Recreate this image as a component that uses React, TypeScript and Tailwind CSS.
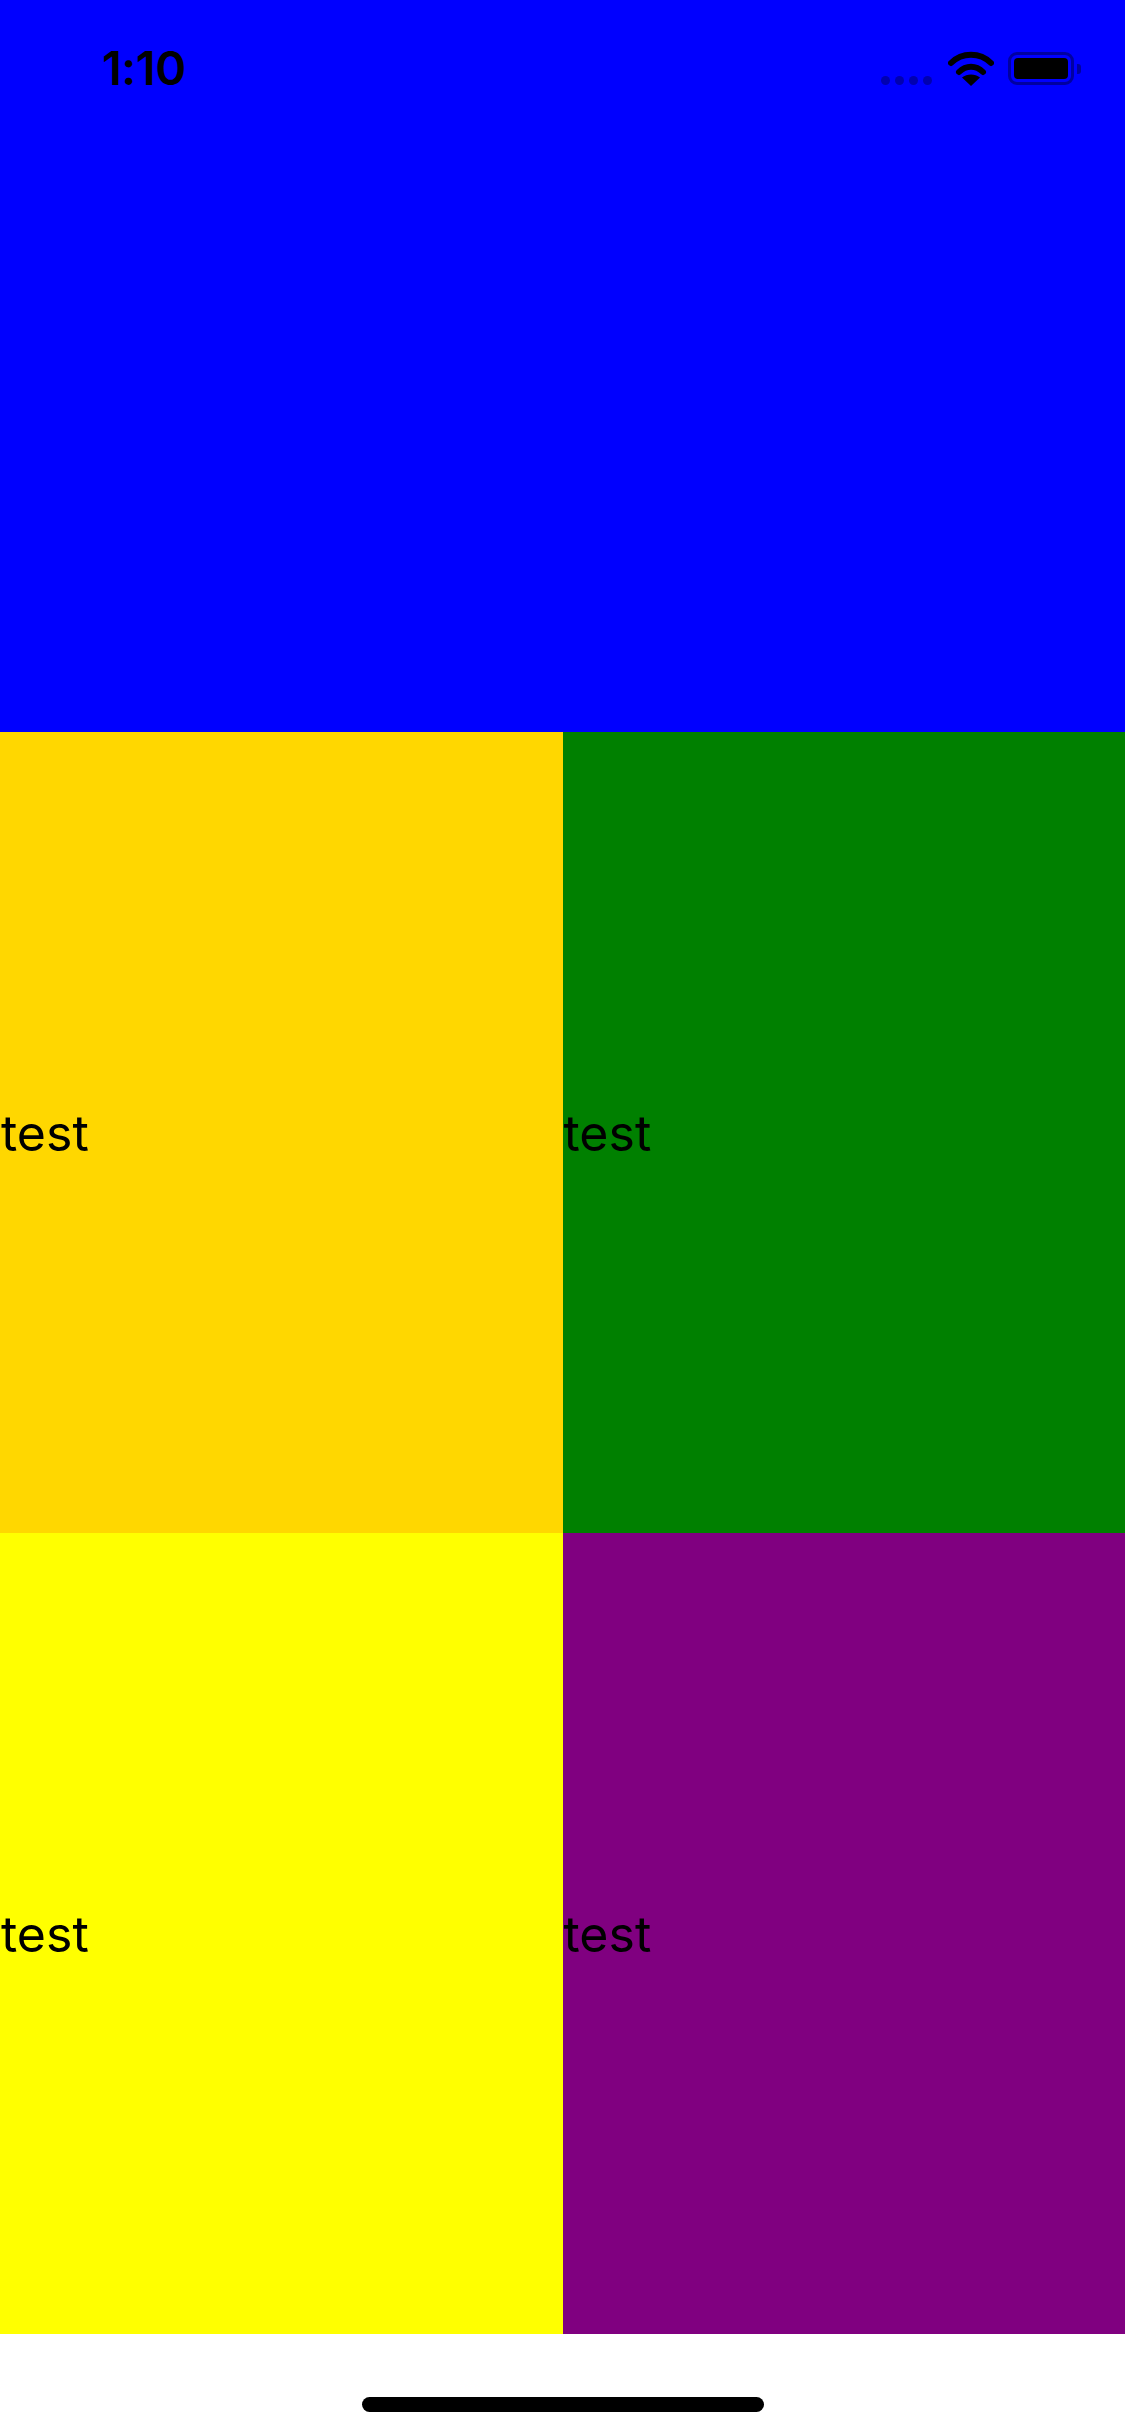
export default function App() {
  const cell = "flex items-center pl-[1px] text-[50px] leading-[60px] text-black";
  return (
    <div className="flex h-[2436px] w-[1125px] flex-col bg-white font-['Inter',sans-serif]">
      <div className="h-[732px] bg-[#0000ff]">
        <div className="flex items-start justify-between pl-[102px] pr-[44px] pt-[40px]">
          <span className="text-[47px] font-semibold leading-[56px] tracking-[-0.5px] text-black">1:10</span>
          <div className="flex items-start pt-[12px]">
            <div className="mt-[24px] flex gap-[5px]">
              <div className="h-[9px] w-[9px] rounded-full bg-[#0000b0]" />
              <div className="h-[9px] w-[9px] rounded-full bg-[#0000b0]" />
              <div className="h-[9px] w-[9px] rounded-full bg-[#0000b0]" />
              <div className="h-[9px] w-[9px] rounded-full bg-[#0000b0]" />
            </div>
            <svg className="-mt-[2px] ml-[16px]" width="46" height="36" viewBox="0 0 46 36" fill="none">
              <path d="M3 13C14 2 32 2 43 13" stroke="#000" strokeWidth="6" strokeLinecap="round" />
              <path d="M11 22C18 15 28 15 35 22" stroke="#000" strokeWidth="6" strokeLinecap="round" />
              <path d="M23 36L14 27.500C19 23.500 27 23.500 32 27.500Z" fill="#000" />
            </svg>
            <div className="ml-[14px] flex items-center">
              <div className="h-[33px] w-[66px] rounded-[9px] border-[3px] border-[#0000a0] p-[3px]">
                <div className="h-full w-full rounded-[4px] bg-black" />
              </div>
              <div className="ml-[3px] h-[10px] w-[4px] rounded-r-[3px] bg-[#0000a0]" />
            </div>
          </div>
        </div>
      </div>
      <div className="grid h-[1602px] grid-cols-2 grid-rows-2">
        <div className={`${cell} bg-[#ffd700]`}>test</div>
        <div className={`${cell} bg-[#008000]`}>test</div>
        <div className={`${cell} bg-[#ffff00]`}>test</div>
        <div className={`${cell} bg-[#800080]`}>test</div>
      </div>
      <div className="flex flex-1 justify-center pt-[63px]">
        <div className="h-[15px] w-[402px] rounded-full bg-black" />
      </div>
    </div>
  );
}
